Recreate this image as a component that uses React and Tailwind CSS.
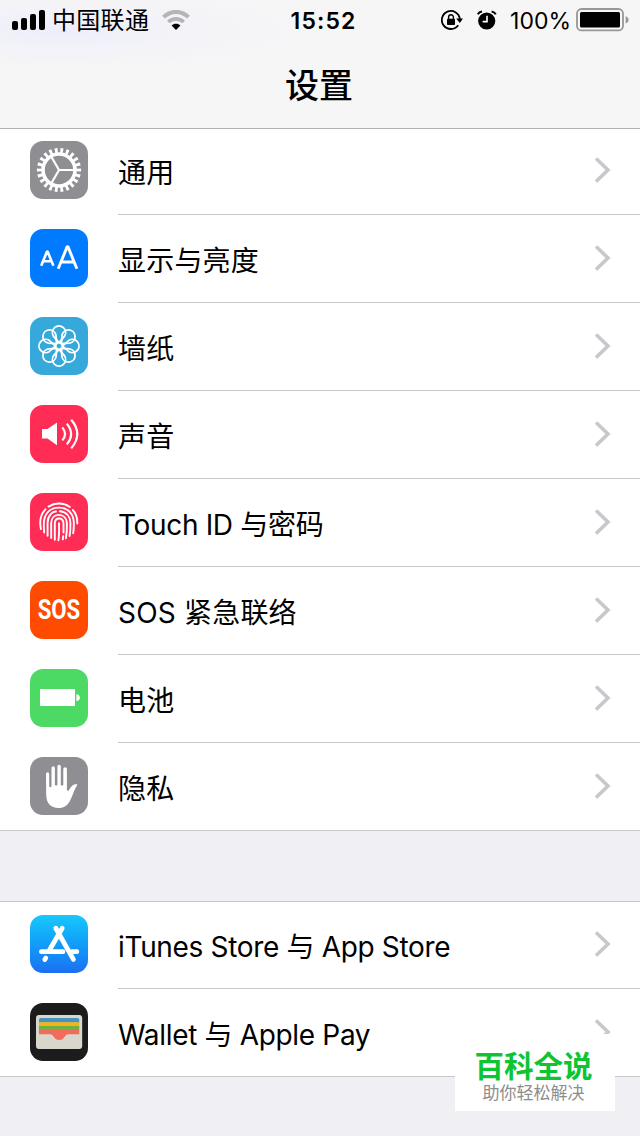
const FONT = "font-['Inter','Noto_Sans_CJK_SC',sans-serif]"

const PETALS = [0, 45, 90, 135, 180, 225, 270, 315]

function GearIcon() {
  return (
    <svg viewBox="0 0 58 58" className="size-full" fill="none" stroke="white">
      <circle cx="29" cy="29" r="19.6" strokeWidth="5" pathLength="88" strokeDasharray="2 2" strokeDashoffset="1" />
      <circle cx="29" cy="29" r="16" strokeWidth="3.6" />
      <path d="M29 29h15M29 29l-7.5-13M29 29l-7.5 13" strokeWidth="2.2" />
    </svg>
  )
}

function DisplayIcon() {
  return (
    <svg viewBox="0 0 58 58" className="size-full" fill="none" stroke="white" strokeLinejoin="bevel">
      <path d="M11.2 36.8L17 22.6H17.6L23.4 36.8M13.4 32.2H21.2" strokeWidth="2.6" />
      <path d="M28.2 39.8L37.2 17.6H37.9L46.9 39.8M31.6 33H43.4" strokeWidth="2.9" />
    </svg>
  )
}

function WallpaperIcon() {
  return (
    <svg viewBox="0 0 58 58" className="size-full" fill="none" stroke="white" strokeWidth="1.8">
      {PETALS.map((a) => (
        <path
          key={a}
          d="M29 25.6L23.6 19.4A6.6 6.6 0 1 1 34.4 19.4Z"
          transform={`rotate(${a} 29 29)`}
        />
      ))}
      <circle cx="29" cy="29" r="3.4" />
    </svg>
  )
}

function SoundIcon() {
  return (
    <svg viewBox="0 0 58 58" className="size-full" fill="none" stroke="white" strokeWidth="2.2">
      <path d="M12 24h5.5L27 17.6V40.2L17.5 33.6H12Z" fill="white" stroke="none" />
      <path d="M32.3 22.4Q37.8 29 32.3 35.4" />
      <path d="M36.8 18.6Q45.4 29 36.8 39.4" />
      <path d="M41.2 14.8Q53.4 29 41.2 43.4" />
    </svg>
  )
}

function TouchIdIcon() {
  return (
    <svg viewBox="0 0 58 58" className="size-full" fill="none" stroke="white" strokeWidth="1.9" strokeLinecap="round">
      <path d="M18.5 13.6C25 9.4 33.5 9.4 39.8 14" />
      <path d="M10.9 36C9.4 28.5 10.8 21 15.4 16.3M42.8 17C45.9 20.2 47.4 25.4 47.3 30.5" />
      <path d="M14.2 39.5C13.8 35 13.6 31.5 14 28C15.5 18.5 22 14.6 29 14.6C38 14.6 43.6 21 43.8 29.5Q44 35 43.2 40.2" />
      <path d="M17.6 42.8V29.5C17.8 22 23 18.2 26 18.5M30 18.3C37.4 19.2 40.3 24.6 40.4 30Q40.6 37.5 39.6 43" />
      <path d="M21.2 45V30C21.4 25 24.6 21.9 28.8 21.9C33.6 21.9 36.8 25.4 36.9 30.5Q37.1 39 35.9 45.2" />
      <path d="M24.8 46.8V30.5C24.9 27.5 26.6 25.5 29 25.5C31.8 25.5 33.4 27.6 33.5 30.5V39.5M33.2 43.2L32.8 46.4" />
      <path d="M28.4 47.4C29.2 42 29.2 36 29 30.2" />
    </svg>
  )
}

function SosIcon() {
  return (
    <div className="flex size-full items-center justify-center">
      <span className="scale-x-[.82] font-['Roboto',sans-serif] text-[27px] leading-[36px] font-bold text-white">SOS</span>
    </div>
  )
}

function BatteryIcon() {
  return (
    <svg viewBox="0 0 58 58" className="size-full" fill="white">
      <rect x="10" y="20" width="35" height="17" />
      <path d="M46.4 25.2C51 25.2 51 32 46.4 32Z" />
    </svg>
  )
}

function HandIcon() {
  return (
    <svg viewBox="0 0 58 58" className="size-full" fill="white">
      <path d="M16 17Q16 15.2 17.6 15.2T19.2 17V29.5Q20.3 30.8 21.5 29.5V11Q21.5 9.2 23.2 9.2T24.9 11V28Q26.2 29.2 27.4 28V9.6Q27.4 7.8 29.1 7.8T30.8 9.6V28Q32 29.2 33.3 28V12Q33.3 10.2 35.1 10.2T36.9 12V33C37.5 34.2 38.6 34 39.2 32.8C40.6 29.8 43.4 27 46.6 26.9Q47.6 27 47 28.2C44.4 32.5 42.6 38.5 40.4 43C37.8 48.4 34 51 28.6 51C20.5 51 16.4 46 16.2 38Z" />
    </svg>
  )
}

function AppStoreIcon() {
  return (
    <svg viewBox="0 0 58 58" className="size-full" fill="none" stroke="white" strokeWidth="4.8" strokeLinecap="round">
      <path d="M32.2 13.2L19.8 34.5M25.8 13.2L43.4 44.4" />
      <path d="M11.4 36.7H33M42 36.7H46.8" />
      <path d="M15.8 43L14.8 44.6" />
    </svg>
  )
}

function WalletIcon() {
  return (
    <svg viewBox="0 0 58 58" className="size-full">
      <rect x="6" y="12" width="46.2" height="34" rx="3" fill="#d9d6cb" />
      <path d="M9 19.5V17Q9 15 11 15H47.3Q49.3 15 49.3 17V19.5Z" fill="#4295bf" />
      <path d="M9 19.2H49.3V23.2H9Z" fill="#f8b11a" />
      <path d="M9 23H49.3V27.2H9Z" fill="#6cb23e" />
      <path d="M9 27H49.3V31.2H38C34.8 31.2 34.4 37 29.2 37S23.6 31.2 20.4 31.2H9Z" fill="#f16c5d" />
    </svg>
  )
}

const GENERAL = [
  { label: '通用', bg: 'bg-[#8e8e93]', icon: GearIcon },
  { label: '显示与亮度', bg: 'bg-[#007aff]', icon: DisplayIcon },
  { label: '墙纸', bg: 'bg-[#36a9da]', icon: WallpaperIcon },
  { label: '声音', bg: 'bg-[#ff2d55]', icon: SoundIcon },
  { label: 'Touch ID 与密码', bg: 'bg-[#ff2d55]', icon: TouchIdIcon, latin: true },
  { label: 'SOS 紧急联络', bg: 'bg-[#ff4b00]', icon: SosIcon },
  { label: '电池', bg: 'bg-[#4cd964]', icon: BatteryIcon },
  { label: '隐私', bg: 'bg-[#8e8e93]', icon: HandIcon },
]

const STORES = [
  {
    label: 'iTunes Store 与 App Store',
    bg: 'bg-linear-to-b from-[#1ac8fb] to-[#1d6ff2]',
    icon: AppStoreIcon,
    latin: true,
  },
  { label: 'Wallet 与 Apple Pay', bg: 'bg-[#1c1c1c]', icon: WalletIcon, latin: true },
]

function StatusBar() {
  return (
    <div className="grid h-10 grid-cols-[1fr_auto_1fr] items-center pl-3 pr-[11px]">
      <div className="flex items-center">
        <svg width="33" height="20" viewBox="0 0 33 20">
          <rect y="11" width="6" height="9" rx="2" />
          <rect x="9" y="8" width="6" height="12" rx="2" />
          <rect x="18" y="4" width="6" height="16" rx="2" />
          <rect x="27" width="6" height="20" rx="2" />
        </svg>
        <span className="ml-[7px] pt-[2px] text-[24px] leading-[38px] tracking-[0.3px]">中国联通</span>
        <svg className="ml-[13px]" width="28" height="20" viewBox="0 0 28 20" fill="none">
          <path d="M1.5 7.2C8.5 .1 19.5 .1 26.5 7.2" stroke="#b5b5b7" strokeWidth="4" />
          <path d="M6.3 12C10.8 7.7 17.2 7.7 21.7 12" stroke="#b5b5b7" strokeWidth="3.8" />
          <path d="M9.6 15.6C12 13.2 16 13.2 18.4 15.6L14 20Z" fill="black" />
        </svg>
      </div>
      <span className="pt-[2px] pl-[6px] text-[23px] font-semibold tracking-[1.1px]">15:52</span>
      <div className="flex items-center justify-end">
        <svg width="22" height="20" viewBox="0 0 22 20" fill="none" stroke="black">
          <path d="M17.2 15.2A9 9 0 1 1 18.8 9" strokeWidth="1.8" />
          <path d="M15.2 8.6H22L18.8 13Z" fill="black" stroke="none" />
          <rect x="6" y="8.8" width="8" height="6.2" rx=".8" fill="black" stroke="none" />
          <path d="M7.6 9V7.2A2.4 2.4 0 0 1 12.4 7.2V9" strokeWidth="1.4" />
        </svg>
        <svg className="ml-[14px]" width="20" height="20" viewBox="0 0 20 20" fill="none">
          <circle cx="9.7" cy="11" r="8.6" fill="black" />
          <path d="M.8 4.4Q2 1.8 5 1.4M14.6 1.4Q17.6 1.8 18.8 4.4" stroke="black" strokeWidth="2" />
          <path d="M10 5.8V11.6H5.6" stroke="white" strokeWidth="1.6" />
        </svg>
        <span className="ml-[13px] pt-[2px] text-[23px]">100%</span>
        <svg className="ml-[5px]" width="53" height="24" viewBox="0 0 53 24">
          <rect x="1" y="1" width="46" height="21.4" rx="4.5" fill="none" stroke="#97979a" strokeWidth="1.8" />
          <rect x="4" y="4" width="40" height="15.6" rx="1.5" />
          <path d="M49.6 8.2Q52.6 9.2 52.6 11.8T49.6 15.4Z" fill="#97979a" />
        </svg>
      </div>
    </div>
  )
}

function Row({ label, bg, icon: Icon, latin, last }) {
  return (
    <li className="flex h-[88px] pl-[30px]">
      <div className={`mt-[14px] size-[58px] shrink-0 rounded-[13px] ${bg}`}>
        <Icon />
      </div>
      <div
        className={`ml-[30px] flex flex-1 items-center justify-between border-b pr-[29px] ${
          last ? 'border-transparent' : 'border-[#c8c7cc]'
        }`}
      >
        <span className={`pt-[5px] text-[28px] leading-none ${latin ? 'tracking-[-0.33px]' : 'tracking-[0.2px]'}`}>
          {label}
        </span>
        <svg className="mb-[2px]" width="17" height="26" viewBox="0 0 17 26" fill="none" stroke="#c7c7cc" strokeWidth="3.6">
          <path d="M2 1.5L14 13L2 24.5" />
        </svg>
      </div>
    </li>
  )
}

function Group({ rows, className }) {
  return (
    <ul className={`bg-white ${className}`}>
      {rows.map((row, i) => (
        <Row key={row.label} {...row} last={i === rows.length - 1} />
      ))}
    </ul>
  )
}

export default function App() {
  return (
    <div className={`relative h-[1136px] w-[640px] overflow-hidden bg-[#efeff4] text-black ${FONT}`}>
      <header className="relative z-10 -mb-[2px] h-[129px] border-b border-[#b2b2b4] bg-[#f6f6f7] bg-[radial-gradient(ellipse_at_60px_30px,#eeeefb_0px,#f3f3f8_130px,#f6f6f7_240px)]">
        <StatusBar />
        <h1 className="mt-[21px] pr-[2px] text-center text-[34px] leading-[50px] font-medium">设置</h1>
      </header>
      <main>
        <Group rows={GENERAL} className="shadow-[inset_0_-1px_0_#c8c7cc]" />
        <Group rows={STORES} className="mt-[70px] shadow-[inset_0_1px_0_#c8c7cc,inset_0_-1px_0_#c8c7cc]" />
      </main>
      <div className="absolute top-[1034px] left-[455px] flex h-[77px] w-[160px] flex-col items-center bg-white pr-[3px]">
        <span className="mt-[14px] text-[29.5px] leading-[36px] font-bold text-[#0fc433]">百科全说</span>
        <span className="text-[17px] leading-[18px] text-[#8d8d8d]">助你轻松解决</span>
      </div>
    </div>
  )
}
